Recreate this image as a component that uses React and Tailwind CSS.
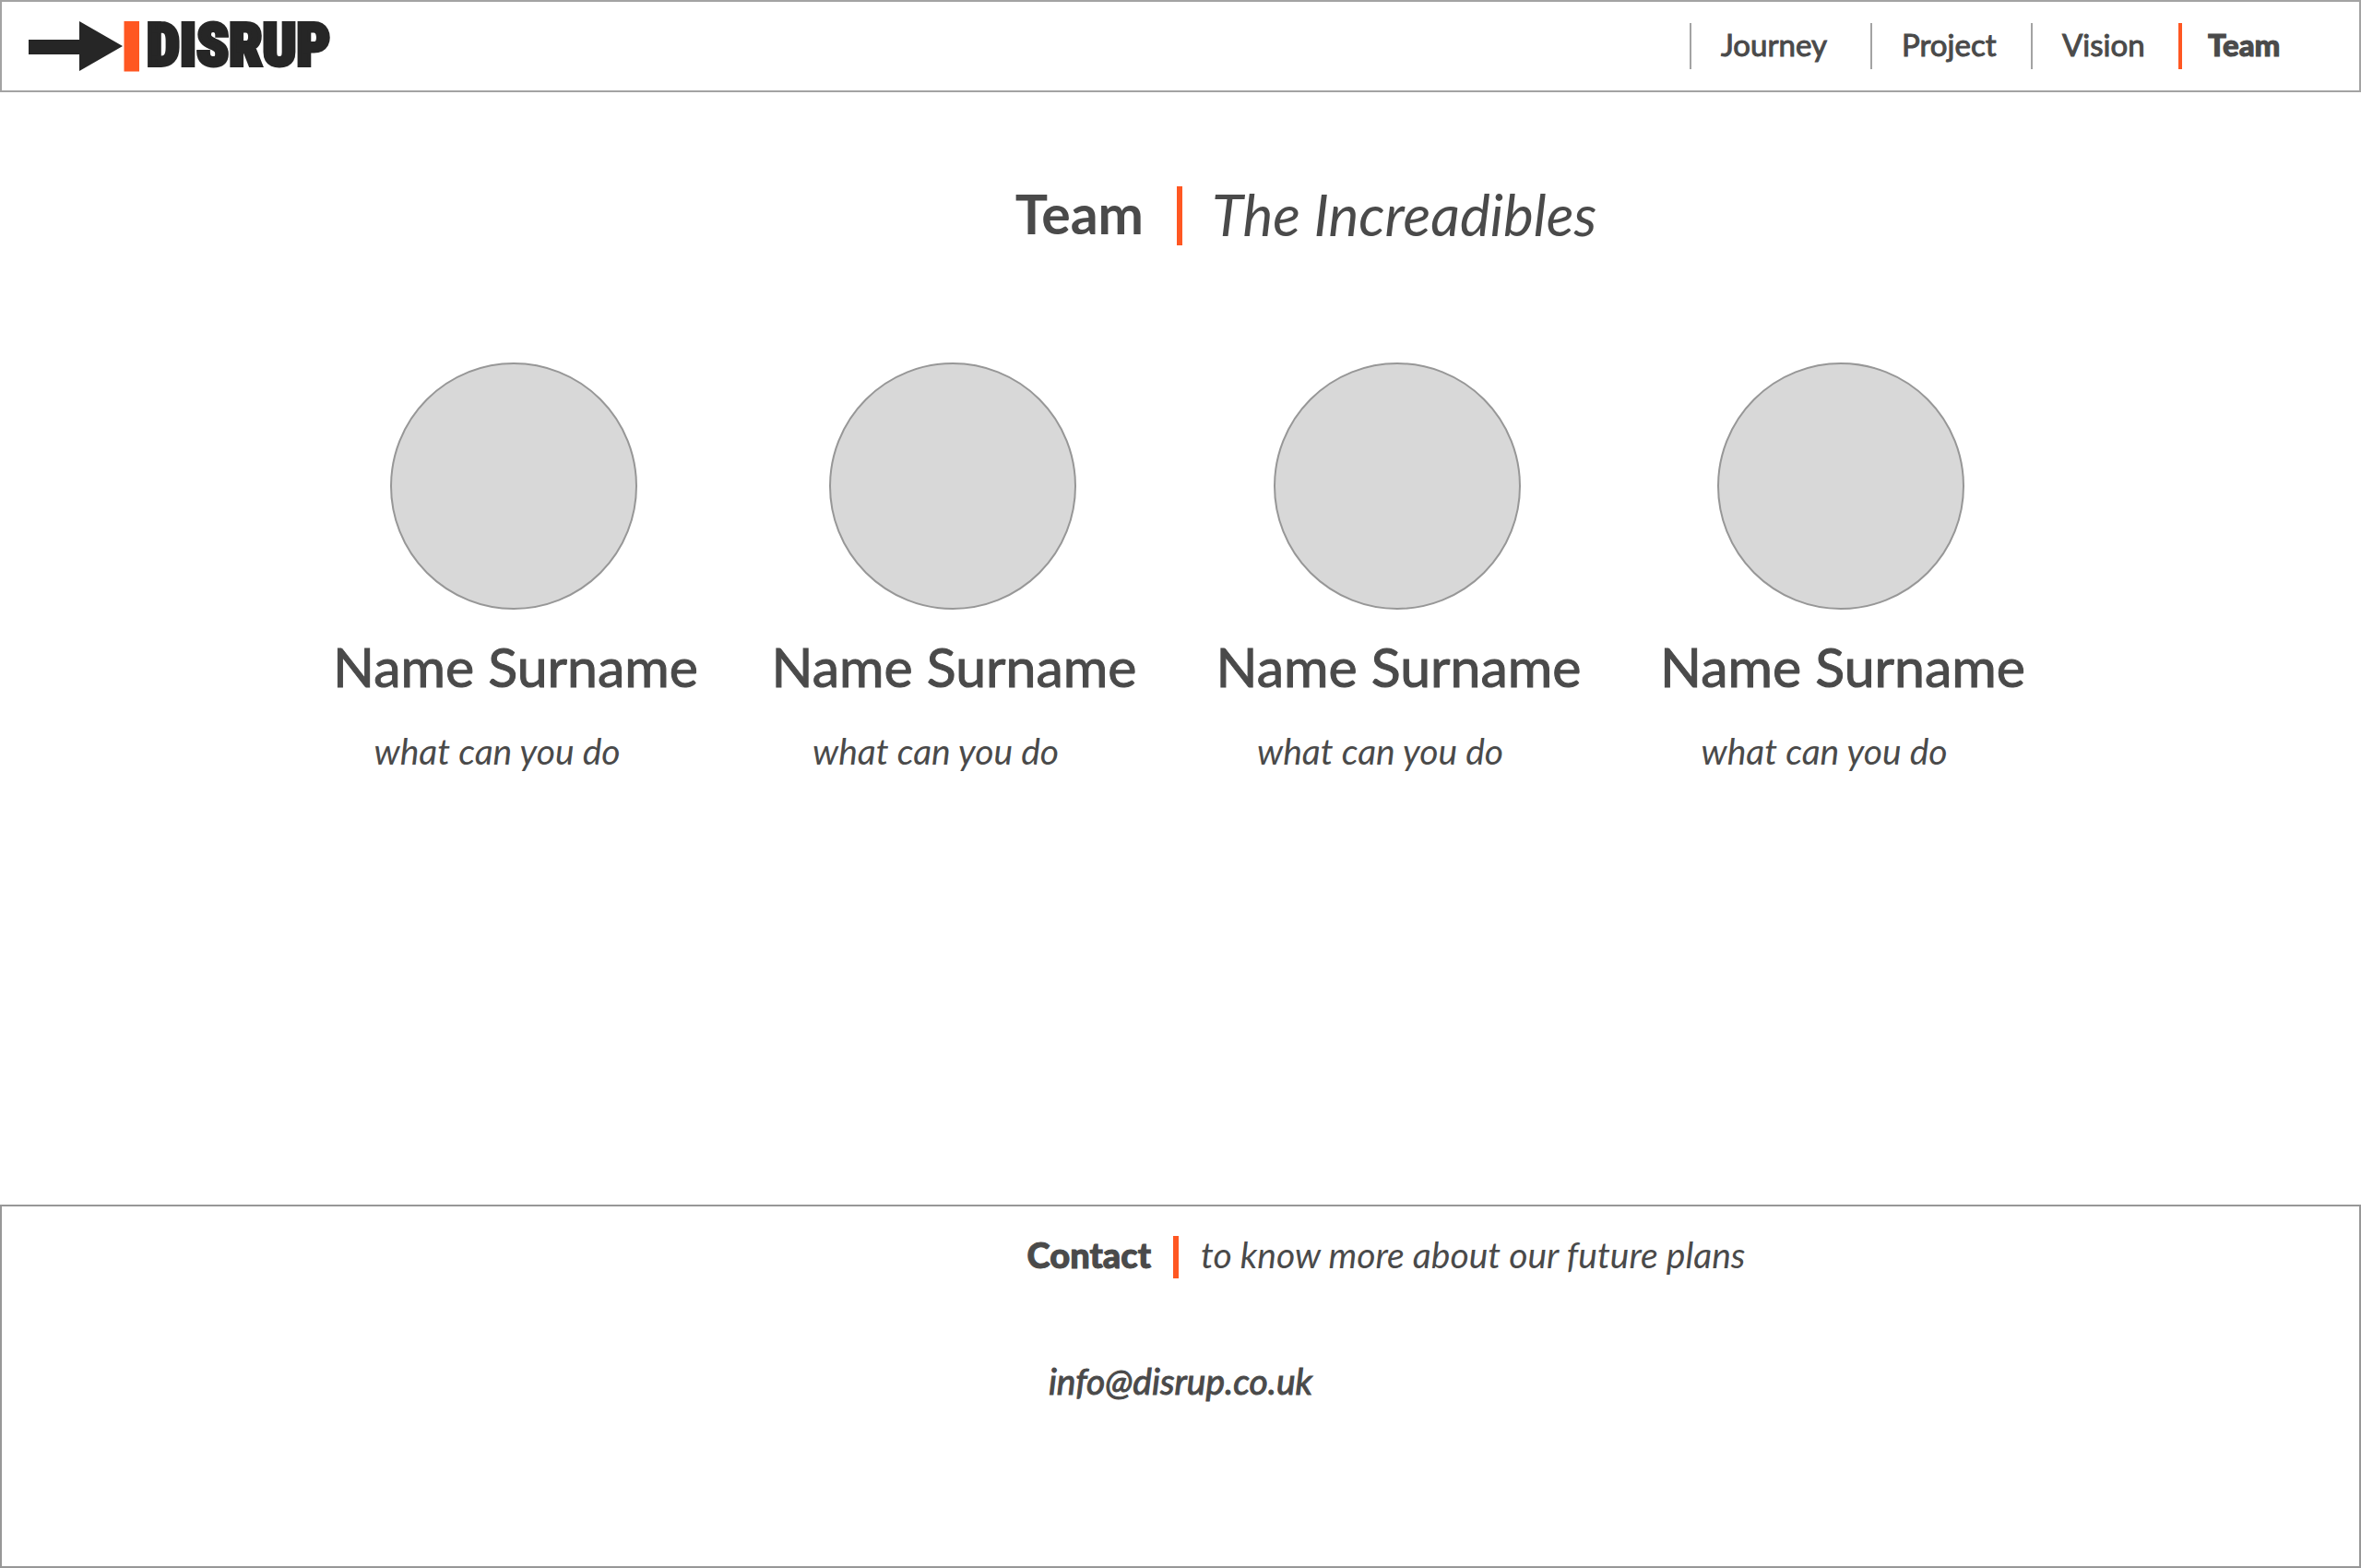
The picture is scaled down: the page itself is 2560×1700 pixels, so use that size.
const NAV_ITEMS = ['Journey', 'Project', 'Vision', 'Team'];

const MEMBERS = [
  { id: 1, name: 'Name Surname', skill: 'what can you do' },
  { id: 2, name: 'Name Surname', skill: 'what can you do' },
  { id: 3, name: 'Name Surname', skill: 'what can you do' },
  { id: 4, name: 'Name Surname', skill: 'what can you do' },
];

function Logo() {
  return (
    <a href="#home" aria-label="Disrup" className="flex items-center text-[#262626]">
      <svg viewBox="0 0 121 56" className="h-14 w-[121px]" aria-hidden="true">
        <path d="M1 21H56V1L103 28L56 55V37H1Z" fill="#262626" />
        <rect x="104.5" y="1" width="16.5" height="54.5" fill="#ff5722" />
      </svg>
      <span className="ml-2 font-['Impact','Roboto_Condensed','Roboto',sans-serif] text-[64px] leading-none font-black [-webkit-text-stroke:4px_#262626]">
        DISRUP
      </span>
    </a>
  );
}

function Header() {
  return (
    <header className="flex h-[100px] items-center justify-between border-2 border-[#a3a3a3] pl-7">
      <Logo />
      <nav className="grid grid-cols-[196px_174px_160px_196px] text-[33px] leading-10">
        {NAV_ITEMS.map((item) => (
          <a
            key={item}
            href={'#' + item.toLowerCase()}
            aria-current={item === 'Team' ? 'page' : undefined}
            className="flex h-[50px] items-center border-l-2 border-[#a3a3a3] pb-1 pl-8 [-webkit-text-stroke:1px] aria-[current=page]:border-l-4 aria-[current=page]:border-[#ff5722] aria-[current=page]:pl-7 aria-[current=page]:font-black"
          >
            {item}
          </a>
        ))}
      </nav>
    </header>
  );
}

function Member({ name, skill }) {
  return (
    <li className="flex flex-col items-center">
      <div className="size-[268px] rounded-full border-2 border-[#979797] bg-[#d8d8d8]" />
      <h2 className="mt-[26px] pl-1 text-[59px] leading-[72px] [-webkit-text-stroke:1px]">{name}</h2>
      <p className="mt-[31px] pr-9 text-[39px] leading-12 italic">{skill}</p>
    </li>
  );
}

export default function App() {
  return (
    <div className="flex min-h-screen flex-col bg-white font-['Avenir','Lato',sans-serif] text-[#4a4a4a]">
      <Header />
      <main className="grow">
        <h1 className="mt-[102px] grid grid-cols-[1fr_auto_1fr] items-start pr-0.5 text-[59px] leading-[60px]">
          <span className="pr-9 text-right font-bold">Team</span>
          <span className="h-16 w-1.5 bg-[#ff5722]" />
          <span className="pl-8 text-[62px] italic">The Increadibles</span>
        </h1>
        <div className="pr-1.5">
          <ul className="mx-auto mt-[127px] grid max-w-[1914px] grid-cols-[474fr_477fr_487fr_476fr]">
            {MEMBERS.map((member) => (
              <Member key={member.id} name={member.name} skill={member.skill} />
            ))}
          </ul>
        </div>
      </main>
      <footer className="h-[394px] border-2 border-[#979797] pt-8">
        <h2 className="grid grid-cols-[1fr_auto_1fr] items-start pr-2.5 text-[39px] leading-10">
          <span className="pr-6 text-right text-[38px] font-black [-webkit-text-stroke:1px]">Contact</span>
          <span className="h-[46px] w-1.5 bg-[#ff5722]" />
          <span className="pl-6 italic">to know more about our future plans</span>
        </h2>
        <p className="mt-[88px] text-center text-[39px] leading-[46px] italic [-webkit-text-stroke:1px]">
          <a href="mailto:info@disrup.co.uk">info@disrup.co.uk</a>
        </p>
      </footer>
    </div>
  );
}
